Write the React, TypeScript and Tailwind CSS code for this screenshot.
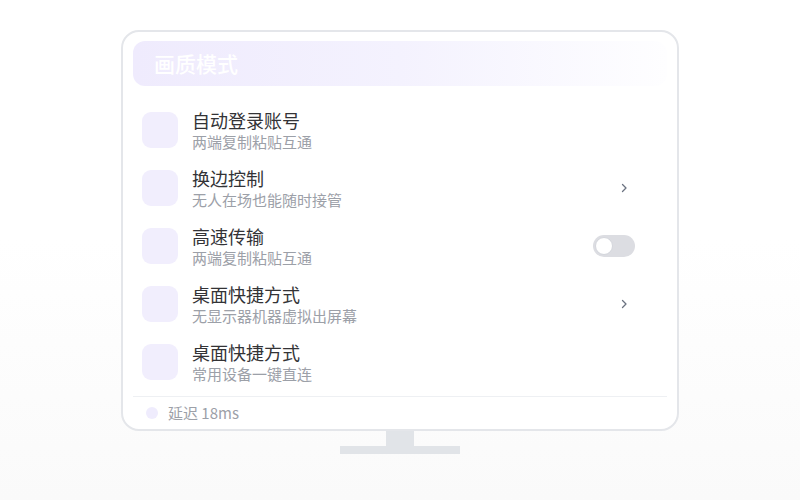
import React from "react";

type Row = { title: string; sub: string; right?: "chevron" | "toggle" };

const rows: Row[] = [
  { title: "自动登录账号", sub: "两端复制粘贴互通" },
  { title: "换边控制", sub: "无人在场也能随时接管", right: "chevron" },
  { title: "高速传输", sub: "两端复制粘贴互通", right: "toggle" },
  { title: "桌面快捷方式", sub: "无显示器机器虚拟出屏幕", right: "chevron" },
  { title: "桌面快捷方式", sub: "常用设备一键直连" },
];

function Chevron() {
  return (
    <svg width="8" height="10" viewBox="0 0 8 10" className="mr-[7px]">
      <path d="M2.5 1.5 L6 5 L2.5 8.5" fill="none" stroke="#6b7280" strokeWidth="1.3" strokeLinecap="round" strokeLinejoin="round" />
    </svg>
  );
}

function Toggle() {
  return (
    <div className="w-[42px] h-[22px] rounded-full bg-[#dcdde2] flex items-center px-[2px]">
      <div className="w-[18px] h-[18px] rounded-full bg-white border border-[#d4d6dc]" />
    </div>
  );
}

export default function App() {
  return (
    <div
      className="w-[800px] h-[500px] flex flex-col items-center pt-[30px] bg-[linear-gradient(to_bottom,#ffffff_48%,#fafafa)]"
      style={{ fontFamily: '"Noto Sans CJK SC", "Noto Sans", sans-serif' }}
    >
      <div className="w-[558px] rounded-[18px] border-2 border-[#e4e6ea] bg-white pt-[9px] px-[10px] flex flex-col">
        <div className="h-[45px] rounded-[12px] bg-gradient-to-r from-[#efebfd] via-[#f4f2fe] to-[#fefeff] flex items-center pl-[21px]">
          <span className="text-[21px] font-medium text-white leading-none">画质模式</span>
        </div>
        <div className="mt-[18px] flex flex-col">
          {rows.map((r, i) => (
            <div key={i} className="flex items-start py-2 pl-[9px] pr-[32px]">
              <div className="w-9 h-9 rounded-[9px] bg-[#f1eefd] shrink-0" />
              <div className="ml-[14px] -mt-[2px] mb-[2px] flex flex-col flex-1">
                <span className="text-[18px] leading-[21px] text-[#333336]">{r.title}</span>
                <span className="text-[15px] leading-[21px] text-[#9ca0a8]">{r.sub}</span>
              </div>
              <div className="h-9 flex items-center justify-end">
                {r.right === "chevron" && <Chevron />}
                {r.right === "toggle" && <Toggle />}
              </div>
            </div>
          ))}
        </div>
        <div className="mt-[2px] h-px bg-[#eef0f3]" />
        <div className="h-8 flex items-center pl-[13px]">
          <div className="w-3 h-3 rounded-full bg-[#efecfd]" />
          <span className="ml-[10px] text-[15px] text-[#9ca0a8]">延迟 18ms</span>
        </div>
      </div>
      <div className="w-[28px] h-[15px] bg-[#e1e4e8]" />
      <div className="w-[120px] h-[8px] bg-[#e1e4e8]" />
    </div>
  );
}
